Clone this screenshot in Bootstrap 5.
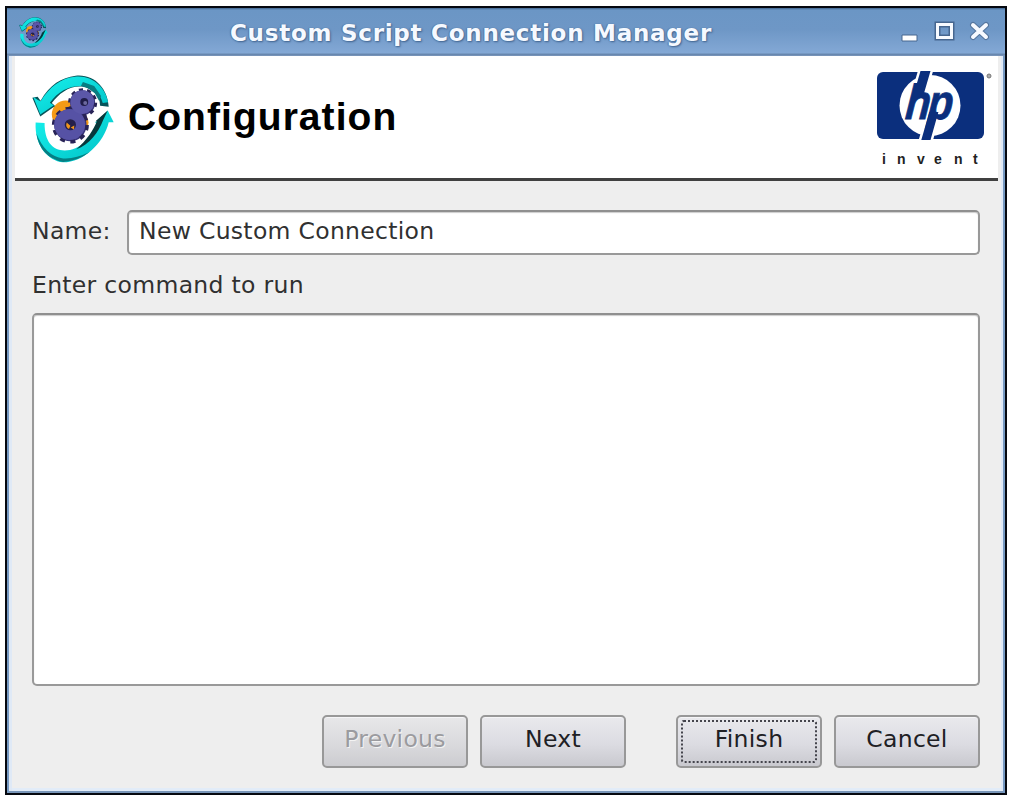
<!DOCTYPE html>
<html lang="en">
<head>
<meta charset="utf-8">
<title>Custom Script Connection Manager</title>
<link href="https://cdn.jsdelivr.net/npm/bootstrap@5.3.0/dist/css/bootstrap.min.css" rel="stylesheet">
<style>
body{background:#fff;height:798px;overflow:hidden;padding:6px 5px 3px;font-family:"DejaVu Sans",sans-serif;font-size:23.5px;letter-spacing:.3px;line-height:28px;color:#303030}
.window{width:1002px;height:789px;border:2px solid #05080f;background:#eee;box-shadow:inset 2px 0 #7699c2,inset -2px 0 #7699c2,inset 0 -2px #7895b8,inset 5px 0 #dfe9f6,inset -4px 0 #dfe9f6,inset 0 -5px #e2ecf8}
.titlebar{height:48px;background:linear-gradient(#41658f 0,#6b96c5 2px,#6e97c6 45%,#83a8d5 93%,#6786ad 97%,#7e99bd);padding:0 16px 0 12px}
.titlebar h1{font-size:23px;font-weight:700;line-height:48px;letter-spacing:.75px;padding:1px 7px 0 0;color:#f5f9ff;text-shadow:1px 1px 2px #3e618d,-1px 0 1px #57799f}
.banner{height:125px;margin:0 7px 0 8px;background:#fff;border-bottom:3px solid #404040;padding:15px 0 0 17px}
.banner h2{font:700 39px/40px "Liberation Sans",sans-serif;letter-spacing:1.05px;font-variant-ligatures:none;color:#000;padding:26px 0 0 14px}
.content-pane{padding:29px 25px 0}
.name-label{width:95px;padding-bottom:3px}
.field{border:2px solid #999;border-top-color:#8f8f8f;border-radius:5px;background:#fff;color:#303030;box-shadow:inset 0 1px 1px #ccc;padding:0 10px 3px;height:45px;font-size:inherit;letter-spacing:inherit}
.command{height:373px;resize:none}
.push{width:146px;height:53px;border:2px solid #989898;border-radius:5px;background:linear-gradient(#e9e9ed,#dcdce2 55%,#c9c9cf);box-shadow:inset 0 1px #f5f5f7;color:#202024;font-size:23.5px;letter-spacing:.3px;padding:0 0 3px;line-height:1}
.push:disabled{background:linear-gradient(#e7e7e9,#dadadd 55%,#ccccd0);color:#9b9b9f;border-color:#989898;opacity:1;text-shadow:1px 1px #f3f3f3}
.focus-frame{display:flex;align-items:center;justify-content:center;border:2px dotted #44444c;border-radius:3px;height:43px;margin:3px 3px 0;padding-bottom:3px}
</style>
</head>
<body>
<svg width="0" height="0" class="position-absolute" aria-hidden="true">
<defs>
<linearGradient id="cy" x1="0" y1="0" x2="1" y2="1"><stop offset="0" stop-color="#17f3ee"/><stop offset="1" stop-color="#00bfc5"/></linearGradient>
<symbol id="gears" viewBox="96 224 248 267" preserveAspectRatio="none">
<circle cx="198" cy="343" r="42" fill="#f59a16"/><circle cx="238" cy="368" r="29" fill="#f59a16"/>
<path d="M97 293L113 290L122 302C150 252 185 232 228 226C285 220 325 265 328 320L302 317C301 285 281 266 247 259C208 256 178 280 156 309L166 318L121 350Z" fill="#07545a"/>
<path d="M100 291L114 300L122 304C150 258 185 233 226 229C277 223 319 261 326 307L310 309C301 276 280 257 245 257C204 257 174 275 150 308L162 316L121 344Z" fill="url(#cy)"/>
<path d="M250 245L284 257L305 288L299 303L286 279L262 262L244 257Z" fill="#087d82"/>
<path d="M107 368L134 370C134 425 157 453 195 453C239 453 280 413 299 368L286 370L325 332L343 367L328 367C313 431 251 489 190 489C144 484 103 438 107 368Z" fill="url(#cy)"/>
<path d="M288 364L325 332L311 361C297 397 270 435 230 449C262 421 283 389 292 364Z" fill="#07383b"/>
<path d="M109 400Q120 474 190 488Q238 484 270 458Q225 480 190 477Q135 470 109 400Z" fill="#067e83"/>
<g fill="#38357c">
<circle cx="212" cy="376" r="49" stroke="#282356" stroke-width="14" stroke-dasharray="15 15.79"/>
<circle cx="249" cy="308" r="38" stroke="#282356" stroke-width="12" stroke-dasharray="12 11.88"/></g>
<circle cx="210" cy="374" r="47" fill="#5652a5"/><circle cx="248" cy="306" r="36" fill="#5b57a9"/>
<circle cx="254" cy="306" r="12" fill="#201d49"/><circle cx="257" cy="309" r="6" fill="#6c699e"/>
<circle cx="212" cy="375" r="17" fill="#24204b"/><path d="M201 368L212 378 208 388Q196 382 201 368M213 383L223 389 224 377Z" fill="#ef951b"/>
</symbol>
</defs>
</svg>
<main class="window">
<header class="titlebar d-flex align-items-center">
<svg width="29" height="31"><use href="#gears"/></svg>
<h1 class="flex-grow-1 text-center mb-0">Custom Script Connection Manager</h1>
<svg width="88" height="28" viewBox="0 0 88 28" fill="none">
<path d="M1 17h15v6H1z" fill="#fff" stroke="#46668f"/>
<path d="M36.500 6.500h14v13h-14z" stroke="#46668f" stroke-width="6"/><path d="M36.500 6.500h14v13h-14z" stroke="#f7faff" stroke-width="3"/>
<path d="M72 7l13 12M85 7L72 19" stroke="#55759d" stroke-width="6" stroke-linecap="round"/><path d="M72 7l13 12M85 7L72 19" stroke="#f7faff" stroke-width="4" stroke-linecap="round"/>
</svg>
</header>
<section class="banner d-flex align-items-start">
<svg class="mt-1" width="82" height="88"><use href="#gears"/></svg>
<h2 class="mb-0 flex-grow-1">Configuration</h2>
<svg width="122" height="98" viewBox="0 0 122 98">
<rect x="1" y="1" width="107" height="67" rx="6" fill="#0b2f7d"/>
<circle cx="54" cy="34.500" r="30.500" fill="#fff"/>
<path d="M44.500 0h10L48.600 20H38.600zM51.400 48h9L54.500 69H45.300z" fill="#0b2f7d" stroke="#fff" stroke-width="5"/>
<path d="M44.500 0h10L46.600 27H36.600zM53.400 41h9L54.500 69H45.300z" fill="#0b2f7d"/>
<text transform="translate(28.500 47.500) skewX(-5) scale(.84 1)" font-family="Liberation Sans" font-size="49" font-weight="700" font-style="italic" fill="#0b2f7d" stroke="#0b2f7d" stroke-width=".8" letter-spacing="-3">hp</text>
<circle cx="113" cy="5" r="2" fill="#aaa" stroke="#777"/>
<g font-family="Liberation Sans" font-weight="700" font-size="14" fill="#222"><text y="93" x="6 21 41 58 78 97">invent</text></g>
</svg>
</section>
<section class="content-pane">
<div class="d-flex align-items-center">
<label for="name" class="flex-shrink-0 name-label">Name:</label>
<input id="name" class="form-control field" value="New Custom Connection">
</div>
<label for="command" class="d-block mt-3" style="margin-bottom:14px">Enter command to run</label>
<textarea id="command" class="form-control field command"></textarea>
<div class="d-flex justify-content-end" style="padding-top:29px;gap:12px">
<button class="btn push" disabled>Previous</button>
<button class="btn push">Next</button>
<button class="btn push" style="margin-left:38px"><span class="focus-frame">Finish</span></button>
<button class="btn push">Cancel</button>
</div>
</section>
</main>
<script src="https://cdn.jsdelivr.net/npm/bootstrap@5.3.0/dist/js/bootstrap.bundle.min.js"></script>
</body>
</html>
